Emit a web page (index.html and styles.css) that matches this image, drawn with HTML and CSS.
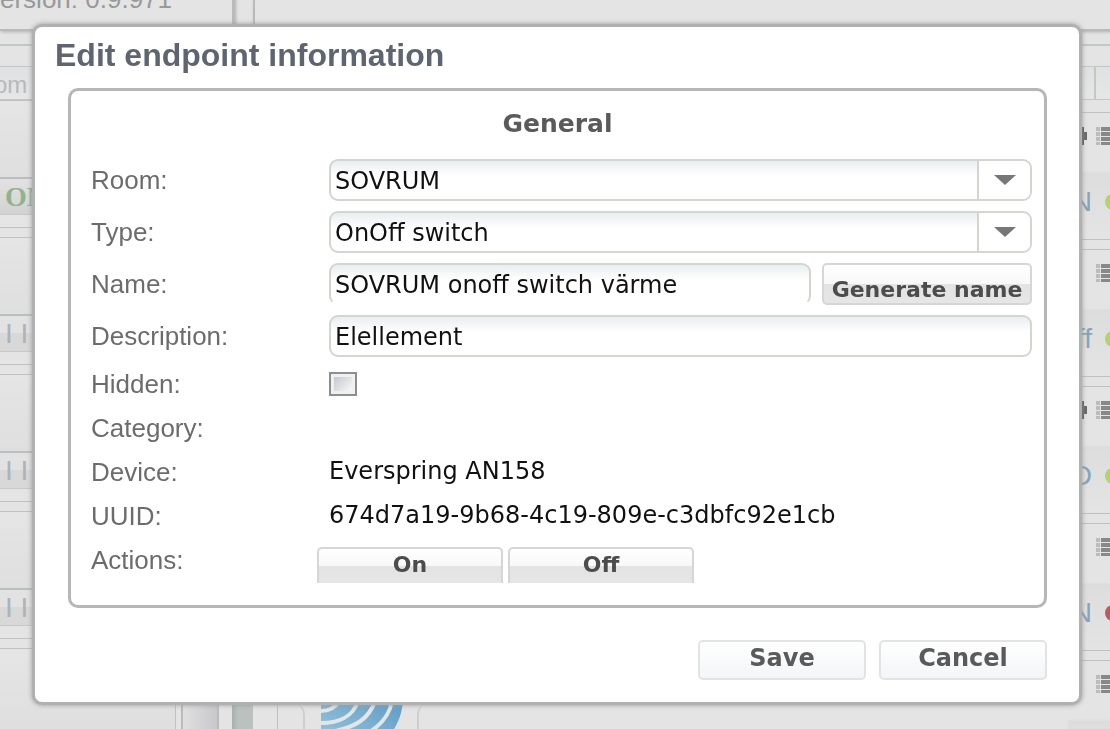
FILE: index.html
```
<!DOCTYPE html>
<html lang="en">
<head>
    <meta charset="UTF-8">
    <meta name="viewport" content="width=device-width, initial-scale=1.0">
    <title>Edit endpoint information</title>
    <link rel="stylesheet" href="styles.css">
</head>
<body>

    <!-- Page behind the dialog -->
    <div class="page">
        <div class="topbar">
            <div class="topbar-info">ersion: 0.9.971</div>
            <div class="topbar-main"></div>
        </div>

        <div class="main">
            <div class="sidebar">
                <div class="filter">om</div>
                <div class="card"><div class="card-bar state">ON</div></div>
                <div class="card"><div class="card-bar level">I I</div></div>
                <div class="card"><div class="card-bar level">I I</div></div>
                <div class="card"><div class="card-bar level">I I</div></div>
                <div class="card"></div>
            </div>
            <div class="scrollbar"></div>
            <div class="splitter"></div>

            <div class="content">
                <div class="tabs">
                    <div class="tab-end"></div>
                    <svg class="signal" width="82" height="50" viewBox="0 0 82 50">
                        <defs>
                            <linearGradient id="blue" x1="0" y1="1" x2="1" y2="0">
                                <stop offset="0" stop-color="#8fc0d8"/>
                                <stop offset="1" stop-color="#5290c0"/>
                            </linearGradient>
                        </defs>
                        <path d="M0 0H82V22C81 33 78 42 73 50H0Z" fill="url(#blue)"/>
                        <g fill="none" stroke="#e3e5e6" stroke-width="4">
                            <path d="M0 32C8 32 14 29 18 22"/>
                            <path d="M0 44C17 44 32 38 37 22"/>
                            <path d="M14 52C34 48 48 40 54 22"/>
                            <path d="M50 52C62 44 69 34 71 22"/>
                        </g>
                    </svg>
                    <div class="tab-panel"></div>
                </div>
            </div>

            <div class="devices">
                <div class="filter filter-split"><span class="filter-arrow"></span></div>
                <div class="card device">
                    <div class="device-head"><span class="plug"></span><span class="list-icon"></span></div>
                    <div class="device-state">ON<span class="dot"></span></div>
                </div>
                <div class="card device">
                    <div class="device-head"><span class="list-icon"></span></div>
                    <div class="device-state">Off<span class="dot"></span></div>
                </div>
                <div class="card device">
                    <div class="device-head"><span class="plug"></span><span class="list-icon"></span></div>
                    <div class="device-state">D<span class="dot"></span></div>
                </div>
                <div class="card device">
                    <div class="device-head"><span class="list-icon"></span></div>
                    <div class="device-state">ON<span class="dot dot-red"></span></div>
                </div>
                <div class="card device">
                    <div class="device-head"><span class="list-icon"></span></div>
                </div>
            </div>
        </div>
    </div>

    <!-- Dialog -->
    <div class="overlay">
        <form class="dialog">
            <h1>Edit endpoint information</h1>

            <div class="group">
                <h2>General</h2>

                <div class="row">
                    <label for="room">Room:</label>
                    <div class="select-box">
                        <select id="room"><option>SOVRUM</option></select>
                        <span class="select-arrow"><svg width="22" height="10" viewBox="0 0 22 10"><path d="M0 0H22L11 10Z" fill="#777"/></svg></span>
                    </div>
                </div>
                <div class="row">
                    <label for="type">Type:</label>
                    <div class="select-box">
                        <select id="type"><option>OnOff switch</option></select>
                        <span class="select-arrow"><svg width="22" height="10" viewBox="0 0 22 10"><path d="M0 0H22L11 10Z" fill="#777"/></svg></span>
                    </div>
                </div>
                <div class="row">
                    <label for="name">Name:</label>
                    <div class="name-box">
                        <input type="text" id="name" class="name-input" value="SOVRUM onoff switch värme">
                        <button type="button" class="btn btn-generate">Generate name</button>
                    </div>
                </div>
                <div class="row">
                    <label for="description">Description:</label>
                    <input type="text" id="description" value="Elellement">
                </div>
                <div class="row row-text">
                    <label for="hidden">Hidden:</label>
                    <input type="checkbox" id="hidden">
                </div>
                <div class="row row-text">
                    <span class="caption">Category:</span>
                </div>
                <div class="row row-text">
                    <span class="caption">Device:</span>
                    <span class="value">Everspring AN158</span>
                </div>
                <div class="row row-text">
                    <span class="caption">UUID:</span>
                    <span class="value">674d7a19-9b68-4c19-809e-c3dbfc92e1cb</span>
                </div>
                <div class="row row-actions">
                    <span class="caption">Actions:</span>
                    <div class="actions">
                        <button type="button" class="btn btn-action">On</button>
                        <button type="button" class="btn btn-action">Off</button>
                    </div>
                </div>
            </div>

            <div class="dialog-buttons">
                <button type="submit" class="btn btn-main">Save</button>
                <button type="button" class="btn btn-main">Cancel</button>
            </div>
        </form>
    </div>

</body>
</html>
```
FILE: styles.css
```
* {
    margin: 0;
    padding: 0;
    box-sizing: border-box;
}

body {
    font-family: "Liberation Sans", Arial, sans-serif;
    background-color: #e4e4e4;
    height: 100vh;
    overflow: hidden;
}

/* Page behind the dialog */
.page {
    display: flex;
    flex-direction: column;
    height: 100vh;
    overflow: hidden;
}

.topbar {
    display: flex;
    gap: 18px;
    height: 31px;
}

.topbar-info {
    width: 235px;
    border-right: 3px solid #b9bbbb;
    border-bottom: 2px solid #b9bbbb;
    box-shadow: 1px 1px 3px #b0b0b0;
    font-size: 26px;
    line-height: 28px;
    margin-top: -15px;
    height: 46px;
    color: #999;
}

.topbar-main {
    flex: 1;
    border-left: 2px solid #b9bbbb;
    border-bottom: 2px solid #b9bbbb;
    box-shadow: 1px 1px 3px #b0b0b0;
    border-bottom-left-radius: 4px;
}

.main {
    display: flex;
    flex: 1;
    margin-top: 13px;
    min-height: 0;
}

.sidebar {
    width: 183px;
    padding-top: 20px;
    border-top: 2px solid #c3c6c6;
    border-right: 2px solid #b9bbbb;
    overflow: hidden;
}

.filter {
    height: 34px;
    border: 1px solid #c6c6c2;
    border-left: none;
    font-size: 24px;
    line-height: 36px;
    color: #b7b9ba;
    margin-right: 5px;
    margin-left: -6px;
    background: linear-gradient(#dfe1e2, #e6e6e6);
}

.card {
    height: 128px;
    margin-bottom: 9px;
    margin-right: 5px;
    border: 1px solid #bfc1c1;
    border-left: none;
    padding-top: 76px;
    background: linear-gradient(#e5e5e5, #dfdfdf 60%, #e5e5e5);
}

.card-bar {
    border-top: 2px solid #bbbebe;
    border-bottom: 1px solid #c8c8c8;
    height: 38px;
    line-height: 36px;
    padding-left: 5px;
}

.state {
    font-family: "Liberation Serif", serif;
    font-weight: bold;
    font-size: 28px;
    color: #90b28c;
    background: linear-gradient(#e2e2e2, #d2d2d2);
}

.level {
    font-size: 28px;
    color: #aeb2bb;
    background: linear-gradient(#e2e2e2 50%, #d8d8d8 50%);
}

.scrollbar {
    width: 36px;
    border-right: 2px solid #bbb;
    background: linear-gradient(90deg, #e0e0e0, #c8c8cb);
}

.splitter {
    width: 21px;
    margin-left: 13px;
    background: linear-gradient(90deg, #a9afad, #bac1bf 30%);
}

.content {
    flex: 1;
    display: flex;
    flex-direction: column;
    justify-content: flex-end;
    margin-left: 24px;
    border-left: 1px solid #c0c0c0;
}

.tabs {
    display: flex;
    align-items: flex-end;
    height: 50px;
    overflow: hidden;
}

.tab-end {
    width: 27px;
    height: 25px;
    border-right: 2px solid #cecece;
    border-top-right-radius: 10px;
}

.signal {
    margin: 0 14px 0 16px;
}

.tab-panel {
    flex: 1;
    height: 25px;
    border-left: 2px solid #cecece;
    border-top-left-radius: 10px;
}

.devices {
    width: 42px;
    padding-top: 20px;
    border-top: 2px solid #c3c6c6;
    overflow: hidden;
}

.devices .filter,
.devices .card {
    margin-right: 0;
    border-right: none;
}

.filter-split {
    display: flex;
    justify-content: flex-end;
    margin-bottom: 12px;
}

.filter-arrow {
    width: 16px;
    border-left: 2px solid #c6c6c2;
}

.device {
    padding-top: 14px;
    background: linear-gradient(#e4e4e4 46%, #dddddd 48%, #e4e4e4);
}

.device-head {
    display: flex;
    justify-content: flex-end;
    gap: 9px;
    height: 62px;
}

.plug {
    width: 10px;
    height: 18px;
    background: linear-gradient(#666, #666) right center / 4px 8px no-repeat,
                linear-gradient(#555, #555) left center / 7px 18px no-repeat;
}

.list-icon {
    width: 14px;
    height: 18px;
    background: linear-gradient(90deg, #bbb 4px, transparent 4px, transparent 5px, #888 5px);
    -webkit-mask: repeating-linear-gradient(#000 0 4px, transparent 4px 5px);
    mask: repeating-linear-gradient(#000 0 4px, transparent 4px 5px);
}

.device-state {
    display: flex;
    justify-content: flex-end;
    align-items: center;
    gap: 13px;
    height: 26px;
    font-size: 28px;
    color: #84a4bc;
}

.dot {
    flex: none;
    width: 16px;
    height: 16px;
    margin-right: -11px;
    border-radius: 50%;
    background-color: #b3d468;
}

.dot-red {
    background-color: #c0585c;
}

/* Dialog */
.overlay {
    position: fixed;
    inset: 0;
    padding: 24px 28px 24px 32px;
}

.dialog {
    background: #fff;
    border: 3px solid #b0b2b2;
    border-radius: 10px;
    box-shadow: 0 0 5px #999;
    padding: 10px 32px 22px 33px;
}

.dialog h1 {
    font-size: 32px;
    line-height: 36px;
    color: #5f6570;
    margin: 0 0 15px -13px;
}

.group {
    border: 3px solid #b5b7b7;
    border-radius: 10px;
    padding: 16px 12px 20px 20px;
}

.group h2 {
    font-family: "DejaVu Sans", Verdana, sans-serif;
    font-size: 25px;
    line-height: 34px;
    text-align: center;
    color: #5a5a5a;
    margin: 0 8px 18px 0;
}

.row {
    display: grid;
    grid-template-columns: 238px 1fr;
    align-items: center;
    min-height: 42px;
    margin-bottom: 10px;
}

.row-text {
    min-height: 34px;
}

.row-actions {
    align-items: start;
    margin-bottom: 0;
}

label,
.caption {
    font-size: 26px;
    line-height: 34px;
    color: #6c6c6c;
}

.value,
select,
input[type="text"] {
    font-family: "DejaVu Sans", Verdana, sans-serif;
    font-size: 24px;
    color: #111;
}

.value {
    line-height: 30px;
    padding-bottom: 2px;
}

select,
input[type="text"] {
    width: 100%;
    height: 42px;
    padding: 2px 4px 0;
    border: 2px solid #d3d5cf;
    border-radius: 9px;
    background: linear-gradient(#e9eef0, #fff 40%);
    appearance: none;
}

.select-box {
    position: relative;
    height: 42px;
}

/* Covers the end of the select, clicks pass through */
.select-arrow {
    position: absolute;
    top: 2px;
    right: 2px;
    bottom: 2px;
    width: 53px;
    display: flex;
    align-items: center;
    justify-content: center;
    border-left: 2px solid #d3d5cf;
    border-radius: 0 7px 7px 0;
    background: #fff;
    pointer-events: none;
}

.name-box {
    display: flex;
    gap: 11px;
}

.name-box .name-input {
    flex: 1;
    min-width: 0;
    border-bottom-color: transparent;
    background-clip: padding-box;
}

input[type="checkbox"] {
    appearance: none;
    width: 28px;
    height: 24px;
    border: 2px solid #8c8f8f;
    background: linear-gradient(135deg, #b8bec8, #f4f4f4 80%);
    box-shadow: inset 0 0 0 3px #f0f0f0;
}

.btn {
    font-family: "DejaVu Sans", Verdana, sans-serif;
    font-weight: bold;
    font-size: 22px;
    color: #4c4c4c;
    border: 2px solid #d6d6d6;
    border-radius: 5px;
    background: linear-gradient(#fff, #f8f8f8 50%, #e3e3e3 50%, #e6e6e6);
    white-space: nowrap;
    cursor: pointer;
}

.btn-generate {
    width: 210px;
    height: 42px;
    padding-top: 10px;
}

.actions {
    display: flex;
    gap: 5px;
    margin: 4px 0 0 -12px;
}

.btn-action {
    width: 186px;
    height: 36px;
    padding-bottom: 4px;
    border-bottom: none;
    border-radius: 5px 5px 0 0;
}

.dialog-buttons {
    display: flex;
    justify-content: flex-end;
    gap: 13px;
    margin-top: 32px;
}

.btn-main {
    width: 168px;
    height: 40px;
    padding-bottom: 4px;
    font-size: 24px;
    color: #5a5a5a;
    border-color: #e2e4e4;
    background: linear-gradient(#fff, #f3f5f7);
}
```
